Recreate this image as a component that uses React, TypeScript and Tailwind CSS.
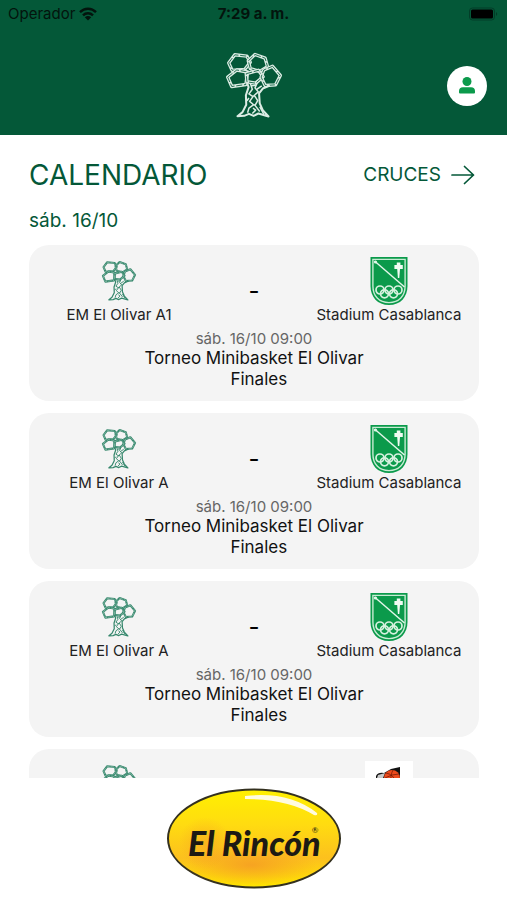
type Team = "olivar" | "stadium" | "basket"

type Match = {
    home?: string
    homeLogo: Team
    away?: string
    awayLogo: Team
    date?: string
    competition?: string
}

const date = "sáb. 16/10 09:00"
const competition = "Torneo Minibasket El Olivar\n  Finales"

const matches: Match[] = [
    { home: "EM El Olivar A1", homeLogo: "olivar", away: "Stadium Casablanca", awayLogo: "stadium", date, competition },
    { home: "EM El Olivar A", homeLogo: "olivar", away: "Stadium Casablanca", awayLogo: "stadium", date, competition },
    { home: "EM El Olivar A", homeLogo: "olivar", away: "Stadium Casablanca", awayLogo: "stadium", date, competition },
    { homeLogo: "olivar", awayLogo: "basket" },
]

const leaves = [
    "42,56 60,32 96,36 106,54 90,75 52,78",
    "120,31 150,42 157,67 134,81 106,73 100,50",
    "39,98 66,77 98,83 93,120 51,126",
    "94,88 130,78 144,97 122,116 96,112",
    "172,66 195,93 181,121 150,123 138,98 146,77",
]

const Tree = ({ className, gap }: { className: string; gap: string }) => (
    <svg viewBox="34 26 166 194" className={className} fill="none" stroke="currentColor" strokeLinejoin="round" aria-hidden="true">
        {leaves.map((points) => (
            <g key={points}>
                <polygon points={points} strokeWidth="10" />
                <polygon points={points} stroke={gap} strokeWidth="2.5" strokeDasharray="18 5" />
            </g>
        ))}
        {/* trunk */}
        <path strokeWidth="6" d="M96 114 L101 128 L93 152 L94 180 L83 202 L68 214 L88 213 L102 207 L116 213 L130 206 L160 215 L143 196 L134 176 L132 146 L143 132 L164 123" />
        <path strokeWidth="4.5" d="M106 116 L112 134 L102 148 L114 156 L104 170 L116 180 L102 190 L98 204 M126 116 L120 130 L130 142 L118 152 L128 168 L120 182 L134 200 M110 124 L124 122 M102 160 L96 168 M114 190 L122 196 L112 206 M134 186 L146 208 M140 124 L126 134 M112 156 L120 152 M116 180 L122 182" />
    </svg>
)

const Shield = () => (
    <svg viewBox="0 0 37 48" className="h-12 w-full" fill="none" aria-hidden="true">
        <path fill="#0b9a4b" d="M0 0H37V29C37 40 30 48 18.5 48S0 40 0 29Z" />
        <path stroke="#c6ebd3" strokeWidth="1.4" d="M2.4 2.4H34.600V29C34.600 39 28.500 45.600 18.500 45.600S2.400 39 2.400 29Z" />
        <path stroke="#e3f6e9" strokeWidth="1.5" d="M4 4L34 30" />
        <circle cx="5" cy="5" r="1.6" fill="#e3f6e9" />
        <path fill="#f0fbf3" d="M26.300 5.500h3.600v2.600H32.300v3.800h-2.800L28.800 21h-1.400L26.700 11.900H23.900v-3.800h2.400Z" />
        <g stroke="#d6f1df" strokeWidth="1.7">
            <circle cx="9.500" cy="33" r="4" />
            <circle cx="18.500" cy="33" r="4" />
            <circle cx="27.500" cy="33" r="4" />
            <circle cx="14" cy="36.800" r="4" />
            <circle cx="23" cy="36.800" r="4" />
        </g>
    </svg>
)

const BasketLogo = () => (
    <svg viewBox="0 0 48 48" className="h-12 w-full" aria-hidden="true">
        <path fill="#fff" d="M0 0H48V48H0Z" />
        <path fill="#111" d="M11 15Q13 11 19 12L26 8L35 6V30H11Z" />
        <path fill="#c8c8c8" d="M13 14L20 12L18 17H12Z" />
        <circle cx="27" cy="17" r="8" fill="#ec4a1c" />
        <path stroke="#7a1d08" strokeWidth="0.8" fill="none" d="M21 12Q28 13 32 22M28 9Q25 14 26 25M20 17Q27 13 34 13" />
    </svg>
)

const TeamLogo = ({ team }: { team: Team }) => {
    if (team === "olivar") {
        return (
            <div className="flex h-12 items-center justify-center">
                <Tree className="h-10 w-9 text-[#35876c]" gap="#b5d5c9" />
            </div>
        )
    }
    return team === "stadium" ? <Shield /> : <BasketLogo />
}

const MatchCard = ({ match }: { match: Match }) => (
    <li className="h-39 shrink-0 rounded-[20px] bg-[#f4f4f4] pt-3 text-center text-[15px]">
        <div className="grid grid-cols-[2fr_1fr_2fr]">
            <div>
                <TeamLogo team={match.homeLogo} />
                {match.home && <p className="leading-5 text-[#222]">{match.home}</p>}
            </div>
            {match.home && <p className="self-center text-2xl text-black">-</p>}
            <div className="col-start-3">
                <TeamLogo team={match.awayLogo} />
                {match.away && <p className="leading-5 text-[#222]">{match.away}</p>}
            </div>
        </div>
        {match.date && <p className="mt-[5px] leading-[18px] text-[#666]">{match.date}</p>}
        {match.competition && (
            <p className="text-[17px] leading-[21px] whitespace-pre text-[#111]">{match.competition}</p>
        )}
    </li>
)

const StatusBar = () => (
    <div className="grid h-7 grid-cols-3 items-center px-2 text-[15px] text-[#03140d]">
        <div className="flex items-center gap-1">
            <span>Operador</span>
            <svg viewBox="0 0 18 14" className="h-3.5 w-4.5" fill="none" stroke="currentColor" strokeWidth="2.4" aria-hidden="true">
                <path d="M1 5.2C5.5 .6 12.5 .6 17 5.2M4 8.3C6.8 5.5 11.2 5.5 14 8.3" />
                <path fill="currentColor" stroke="none" d="M9 13.5L5.8 10.3Q9 7.6 12.2 10.3Z" />
            </svg>
        </div>
        <span className="text-center font-bold">7:29 a. m.</span>
        <svg viewBox="0 0 30 14" className="h-3.5 w-7.5 justify-self-end" aria-hidden="true">
            <rect x="0.5" y="1" width="25" height="12" rx="3" fill="none" stroke="#033d28" />
            <rect x="2" y="2.5" width="22" height="9" rx="1.5" fill="#000" />
            <path fill="#033d28" d="M27 5Q29.5 7 27 9Z" />
        </svg>
    </div>
)

const SponsorLogo = () => (
    <svg viewBox="0 0 174 101" className="w-[174px]" role="img" aria-label="El Rincón">
        <defs>
            <linearGradient id="gold" x1="0" y1="0" x2="0" y2="1">
                <stop offset="0" stopColor="#fff000" />
                <stop offset="0.35" stopColor="#ffdc10" />
                <stop offset="0.7" stopColor="#fcc01e" />
                <stop offset="1" stopColor="#ffe600" />
            </linearGradient>
            <radialGradient id="amber">
                <stop offset="0" stopColor="#f59a24" stopOpacity="0.8" />
                <stop offset="1" stopColor="#f59a24" stopOpacity="0" />
            </radialGradient>
        </defs>
        <ellipse cx="87" cy="50.5" rx="86" ry="49" fill="url(#gold)" stroke="#33301f" strokeWidth="2" />
        <ellipse cx="84" cy="77" rx="66" ry="21" fill="url(#amber)" />
        <ellipse cx="38" cy="55" rx="26" ry="26" fill="url(#amber)" opacity="0.6" />
        <path fill="#fffbe0" d="M78 8Q122 3 150 25Q151 28 147 27Q121 11 78 11Z" />
        <text x="21" y="68" fill="#1d1a14" fontFamily="Lato, sans-serif" fontStyle="italic" fontWeight="900" fontSize="34">
            El Rincón
            <tspan dx="-9" dy="-23" fontStyle="normal" fontWeight="400" fontSize="8">®</tspan>
        </text>
    </svg>
)

export default function App() {
    return (
        <div className="flex h-screen flex-col overflow-hidden bg-white font-['Inter',sans-serif]">
            <header className="h-[135px] shrink-0 bg-[#045838]">
                <StatusBar />
                <div className="grid grid-cols-[1fr_auto_1fr] items-center px-5 pt-6">
                    <Tree className="col-start-2 h-[67px] w-14 text-[#dcece4]" gap="#045838" />
                    <button type="button" aria-label="Perfil" className="flex size-10 items-center justify-center justify-self-end rounded-full bg-white">
                        <svg viewBox="0 0 16 17" className="h-[17px] w-4" fill="#0b9a4b" aria-hidden="true">
                            <circle cx="8" cy="4.5" r="4.5" />
                            <path d="M0 14Q0 10.2 4 10.2H12Q16 10.2 16 14V15.5Q16 16.500 15 16.500H1Q0 16.500 0 15.500Z" />
                        </svg>
                    </button>
                </div>
            </header>

            <main className="flex min-h-0 flex-1 flex-col pt-5 pr-7 pl-[29px] text-[#045838]">
                <div className="flex h-10 items-center justify-between">
                    <h1 className="text-[28px]">CALENDARIO</h1>
                    <a href="#cruces" className="flex items-center gap-2.5 pr-1 text-[19px]">
                        CRUCES
                        <svg viewBox="0 0 24 20" className="h-5 w-6" fill="none" stroke="currentColor" strokeWidth="1.7" strokeLinecap="round" strokeLinejoin="round" aria-hidden="true">
                            <path d="M1 10H22.5M13.5 1.5L22.5 10L13.5 18.5" />
                        </svg>
                    </a>
                </div>
                <h2 className="mt-3 text-[19px] leading-7">sáb. 16/10</h2>
                <ul className="mt-2.5 flex min-h-0 flex-1 flex-col gap-3 overflow-hidden">
                    {matches.map((match, i) => (
                        <MatchCard key={i} match={match} />
                    ))}
                </ul>
            </main>

            <footer className="flex h-[122px] shrink-0 items-start justify-center pt-2.5">
                <SponsorLogo />
            </footer>
        </div>
    )
}
